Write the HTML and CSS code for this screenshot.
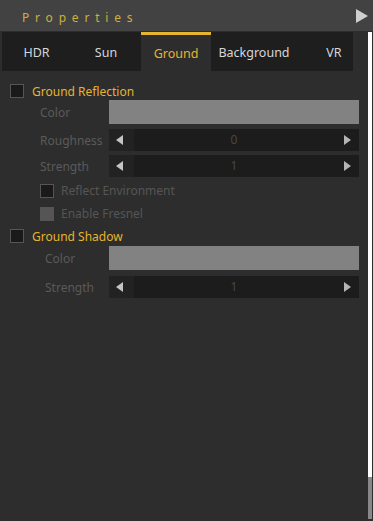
FILE: index.html
```html
<!DOCTYPE html>
<html lang="en">
<head>
    <meta charset="UTF-8">
    <meta name="viewport" content="width=device-width, initial-scale=1.0">
    <title>Properties</title>
    <link rel="stylesheet" href="styles.css">
</head>
<body>

<div class="header">
    <span class="title">Properties</span>
    <span class="collapse"></span>
</div>

<div class="body">
    <div class="main">
        <!-- Tabs -->
        <div class="tabs">
            <div class="tab tab-hdr">HDR</div>
            <div class="tab tab-sun">Sun</div>
            <div class="tab tab-ground active">Ground</div>
            <div class="tab tab-bg">Background</div>
            <div class="tab tab-vr">VR</div>
        </div>

        <!-- Ground Reflection -->
        <div class="group group-reflect">
            <div class="group-head">
                <span class="check"></span>
                <span class="group-title">Ground Reflection</span>
            </div>
            <div class="row row-color">
                <span class="label">Color</span>
                <div class="swatch"></div>
            </div>
            <div class="row row-spin first-spin">
                <span class="label">Roughness</span>
                <div class="spinner">
                    <span class="spin-btn left"><i class="arrow-left"></i></span>
                    <span class="spin-value">0</span>
                    <span class="spin-btn right"><i class="arrow-right"></i></span>
                </div>
            </div>
            <div class="row row-spin">
                <span class="label">Strength</span>
                <div class="spinner">
                    <span class="spin-btn left"><i class="arrow-left"></i></span>
                    <span class="spin-value">1</span>
                    <span class="spin-btn right"><i class="arrow-right"></i></span>
                </div>
            </div>
            <div class="option first-option">
                <span class="check"></span>
                <span class="option-label">Reflect Environment</span>
            </div>
            <div class="option">
                <span class="check disabled"></span>
                <span class="option-label">Enable Fresnel</span>
            </div>
        </div>

        <!-- Ground Shadow -->
        <div class="group group-shadow">
            <div class="group-head">
                <span class="check"></span>
                <span class="group-title">Ground Shadow</span>
            </div>
            <div class="row row-color">
                <span class="label">Color</span>
                <div class="swatch"></div>
            </div>
            <div class="row row-spin first-spin">
                <span class="label">Strength</span>
                <div class="spinner">
                    <span class="spin-btn left"><i class="arrow-left"></i></span>
                    <span class="spin-value">1</span>
                    <span class="spin-btn right"><i class="arrow-right"></i></span>
                </div>
            </div>
        </div>
    </div>

    <div class="scrollbar">
        <div class="track"></div>
        <div class="thumb"></div>
    </div>
</div>

</body>
</html>
```

FILE: styles.css
```css
html, body {
    height: 100%;
}
body {
    font-family: 'Noto Sans', 'Open Sans', sans-serif;
    font-size: 12px;
    background: #2d2d2d;
    color: #5a5a5a;
    margin: 0;
    padding: 0;
    display: flex;
    flex-direction: column;
    overflow: hidden;
}
.header {
    height: 31px;
    flex: none;
    background: #424242;
    display: flex;
    align-items: center;
    justify-content: space-between;
    padding: 0 5px 0 22px;
    border-bottom: 1px solid #2d2d2d;
}
.title {
    color: #cdb13c;
    font-size: 12px;
    letter-spacing: 5.8px;
    margin-top: 3px;
}
.collapse {
    width: 0;
    height: 0;
    border-top: 7px solid transparent;
    border-bottom: 7px solid transparent;
    border-left: 12px solid #cfcfcf;
}
.body {
    flex: 1;
    display: flex;
}
.main {
    flex: 1;
}
.tabs {
    display: flex;
    height: 39px;
    width: 351px;
    margin-left: 2px;
    background: #1e1e1e;
    overflow: hidden;
}
.tab {
    flex: none;
    display: flex;
    align-items: center;
    justify-content: center;
    color: #d4d6dc;
    font-size: 12.5px;
    padding-top: 1px;
    box-sizing: border-box;
}
.tab-hdr { width: 69px; }
.tab-sun { width: 70px; }
.tab-ground { width: 70px; }
.tab-bg { width: 86px; }
.tab-vr { width: 74px; }
.tab.active {
    background: #2d2d2d;
    color: #e6b42e;
    border-top: 3px solid #e6b42e;
    padding-top: 0;
}
.group-reflect {
    margin-top: 11px;
}
.group-shadow {
    margin-top: 2px;
}
.group-head {
    display: flex;
    align-items: center;
    height: 18px;
    padding-left: 10px;
}
.check {
    width: 12px;
    height: 12px;
    flex: none;
    background: #1a1a1a;
    border: 1px solid #555;
}
.check.disabled {
    background: #555;
    border-color: #555;
}
.group-title {
    color: #e6b42e;
    margin-left: 8px;
}
.row {
    display: flex;
    align-items: center;
    padding-left: 40px;
    width: 359px;
    box-sizing: border-box;
}
.group-shadow .row {
    padding-left: 45px;
}
.group-shadow .row-color {
    margin-top: 1px;
}
.label {
    flex: 1;
}
.row-color {
    height: 24px;
}
.swatch {
    width: 250px;
    height: 24px;
    background: #828282;
}
.row-spin {
    height: 22px;
    margin-top: 4px;
}
.row-spin.first-spin {
    margin-top: 5px;
}
.group-shadow .row-spin.first-spin {
    margin-top: 6px;
}
.spinner {
    width: 250px;
    height: 22px;
    display: flex;
    background: #1c1c1c;
}
.spin-btn {
    width: 25px;
    display: flex;
    align-items: center;
    justify-content: center;
}
.spin-btn.left {
    background: #222;
}
.spin-value {
    flex: 1;
    text-align: center;
    line-height: 22px;
    color: #474747;
}
.arrow-left, .arrow-right {
    width: 0;
    height: 0;
    border-top: 5px solid transparent;
    border-bottom: 5px solid transparent;
}
.arrow-left {
    border-right: 7px solid #c4c4c4;
    margin-left: -4px;
}
.arrow-right {
    border-left: 7px solid #b4b4b4;
    margin-left: 2px;
}
.option {
    display: flex;
    align-items: center;
    height: 23px;
    padding-left: 40px;
}
.option.first-option {
    margin-top: 2px;
}
.option-label {
    margin-left: 7px;
    color: #555;
}
.scrollbar {
    width: 4px;
    margin-right: 1px;
    display: flex;
    flex-direction: column;
    padding-bottom: 2px;
}
.track {
    flex: 1;
    background: #fdfdfd;
}
.thumb {
    height: 42px;
    background: #888;
}
```
